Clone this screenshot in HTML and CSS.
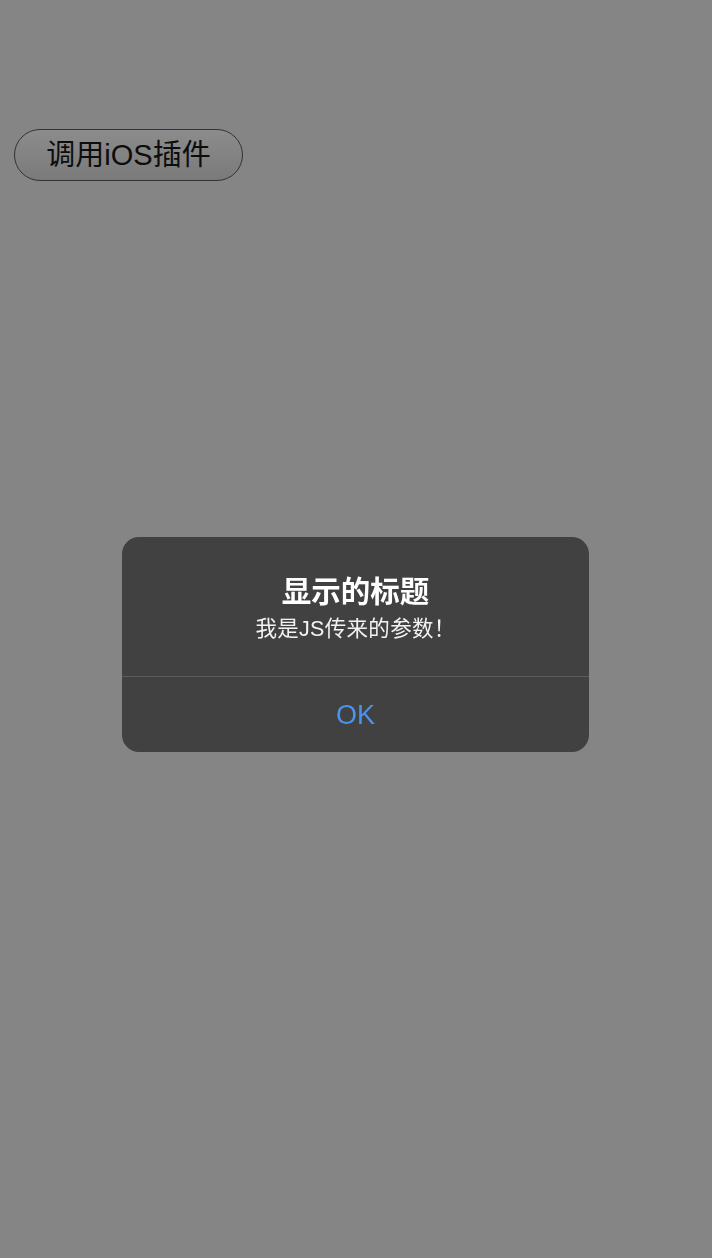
FILE: index.html
```html
<!DOCTYPE html>
<html lang="zh-CN">
<head>
<meta charset="utf-8">
<title>iOS插件</title>
<link rel="stylesheet" href="styles.css">
</head>
<body>
<main class="page">
  <button class="plugin-btn" type="button">调用iOS插件</button>
</main>
<div class="overlay">
  <div class="alert">
    <div class="alert-body">
      <div class="alert-title">显示的标题</div>
      <div class="alert-msg">我是JS传来的参数！</div>
    </div>
    <div class="alert-action">OK</div>
  </div>
</div>
</body>
</html>
```

FILE: styles.css
```css
html, body {
  margin: 0;
  padding: 0;
  height: 100%;
}
body {
  background: #858585;
  font-family: "Liberation Sans", "Noto Sans CJK SC", sans-serif;
}
.page {
  padding: 129px 0 0 14px;
}
.plugin-btn {
  display: block;
  box-sizing: border-box;
  width: 229px;
  height: 52px;
  margin: 0;
  padding: 0;
  border: 1.8px solid #333;
  border-radius: 26px;
  background: linear-gradient(#8c8c8c, #7a7a7a);
  color: #0d0d0d;
  font-family: "Liberation Sans", "Noto Sans CJK SC", sans-serif;
  font-size: 29px;
  line-height: 48px;
  text-align: center;
}
.overlay {
  position: fixed;
  inset: 0;
  display: flex;
  justify-content: center;
  align-items: flex-start;
  padding-top: 537px;
}
.alert {
  width: 467px;
  margin-left: -1px;
  background: #414141;
  border-radius: 17px;
  overflow: hidden;
  color: #fff;
  text-align: center;
}
.alert-body {
  padding: 38px 20px 34px;
  border-bottom: 1px solid #5c5c5c;
}
.alert-title {
  font-size: 29.5px;
  font-weight: bold;
  line-height: 34px;
}
.alert-msg {
  margin-top: 7px;
  font-size: 21.5px;
  line-height: 26px;
  color: #f2f2f2;
  letter-spacing: 0.3px;
}
.alert-action {
  height: 75px;
  line-height: 76px;
  font-size: 27px;
  color: #4a93ee;
}
```
